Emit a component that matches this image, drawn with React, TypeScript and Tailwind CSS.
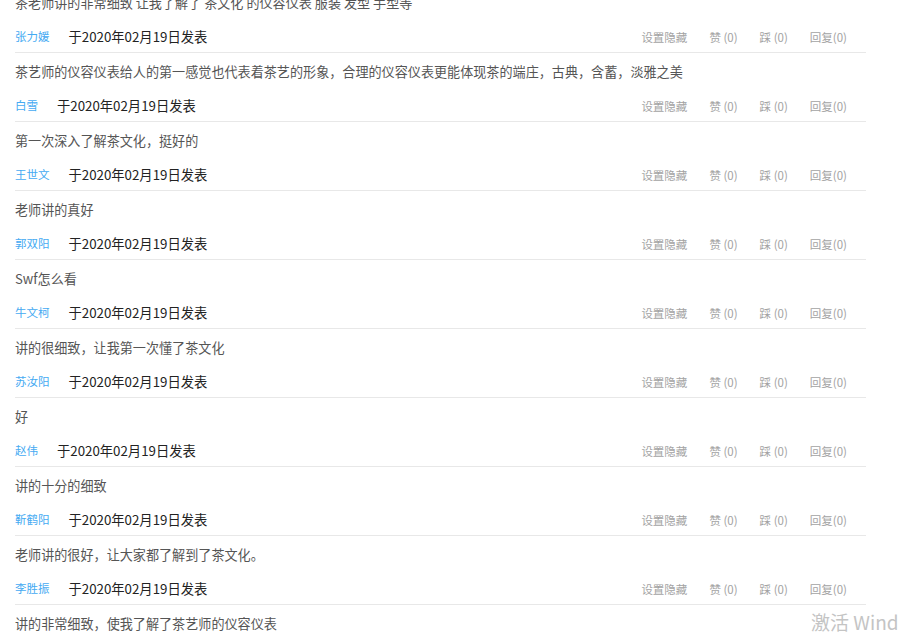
const comments = [
  { text: "茶老师讲的非常细致 让我了解了 茶文化 的仪容仪表 服装 发型 手型等", name: "张力媛" },
  { text: "茶艺师的仪容仪表给人的第一感觉也代表着茶艺的形象，合理的仪容仪表更能体现茶的端庄，古典，含蓄，淡雅之美", name: "白雪" },
  { text: "第一次深入了解茶文化，挺好的", name: "王世文" },
  { text: "老师讲的真好", name: "郭双阳" },
  { text: "Swf怎么看", name: "牛文柯" },
  { text: "讲的很细致，让我第一次懂了茶文化", name: "苏汝阳" },
  { text: "好", name: "赵伟" },
  { text: "讲的十分的细致", name: "靳鹤阳" },
  { text: "老师讲的很好，让大家都了解到了茶文化。", name: "李胜振" },
  { text: "讲的非常细致，使我了解了茶艺师的仪容仪表", name: "" },
];

export default function App() {
  return (
    <main
      className="relative h-[636px] w-[900px] overflow-hidden bg-white"
      style={{ fontFamily: '"Segoe UI", "Noto Sans CJK SC", "Noto Sans", sans-serif' }}
    >
      <ul className="ml-[15px] mt-[-16px] w-[851px]">
        {comments.map((c, i) => (
          <li key={i} className="border-b border-[#e8e8e8] pt-[9px] pb-[5px]">
            <p className="h-[20px] text-[13.1px] leading-[20px] text-[#555]">{c.text}</p>
            {c.name && (
              <div className="mt-[14px] flex h-[20px] items-center">
                <span className="mr-[19px] -mt-[3px] text-[11.5px] leading-[20px] text-[#45aaf2]">
                  {c.name}
                </span>
                <span className="text-[13.3px] leading-[20px] text-[#222]">于2020年02月19日发表</span>
                <div className="ml-auto mr-[19px] flex gap-[22px] text-[11.5px] leading-[20px] text-[#a3a3a3]">
                  <span>设置隐藏</span>
                  <span>赞 (0)</span>
                  <span>踩 (0)</span>
                  <span>回复(0)</span>
                </div>
              </div>
            )}
          </li>
        ))}
      </ul>
      {/* windows activation watermark */}
      <div className="pointer-events-none absolute left-[811px] top-[609px] whitespace-nowrap text-[19px] leading-[26px] text-[#c4c4c4]">
        激活 Wind
      </div>
    </main>
  );
}
